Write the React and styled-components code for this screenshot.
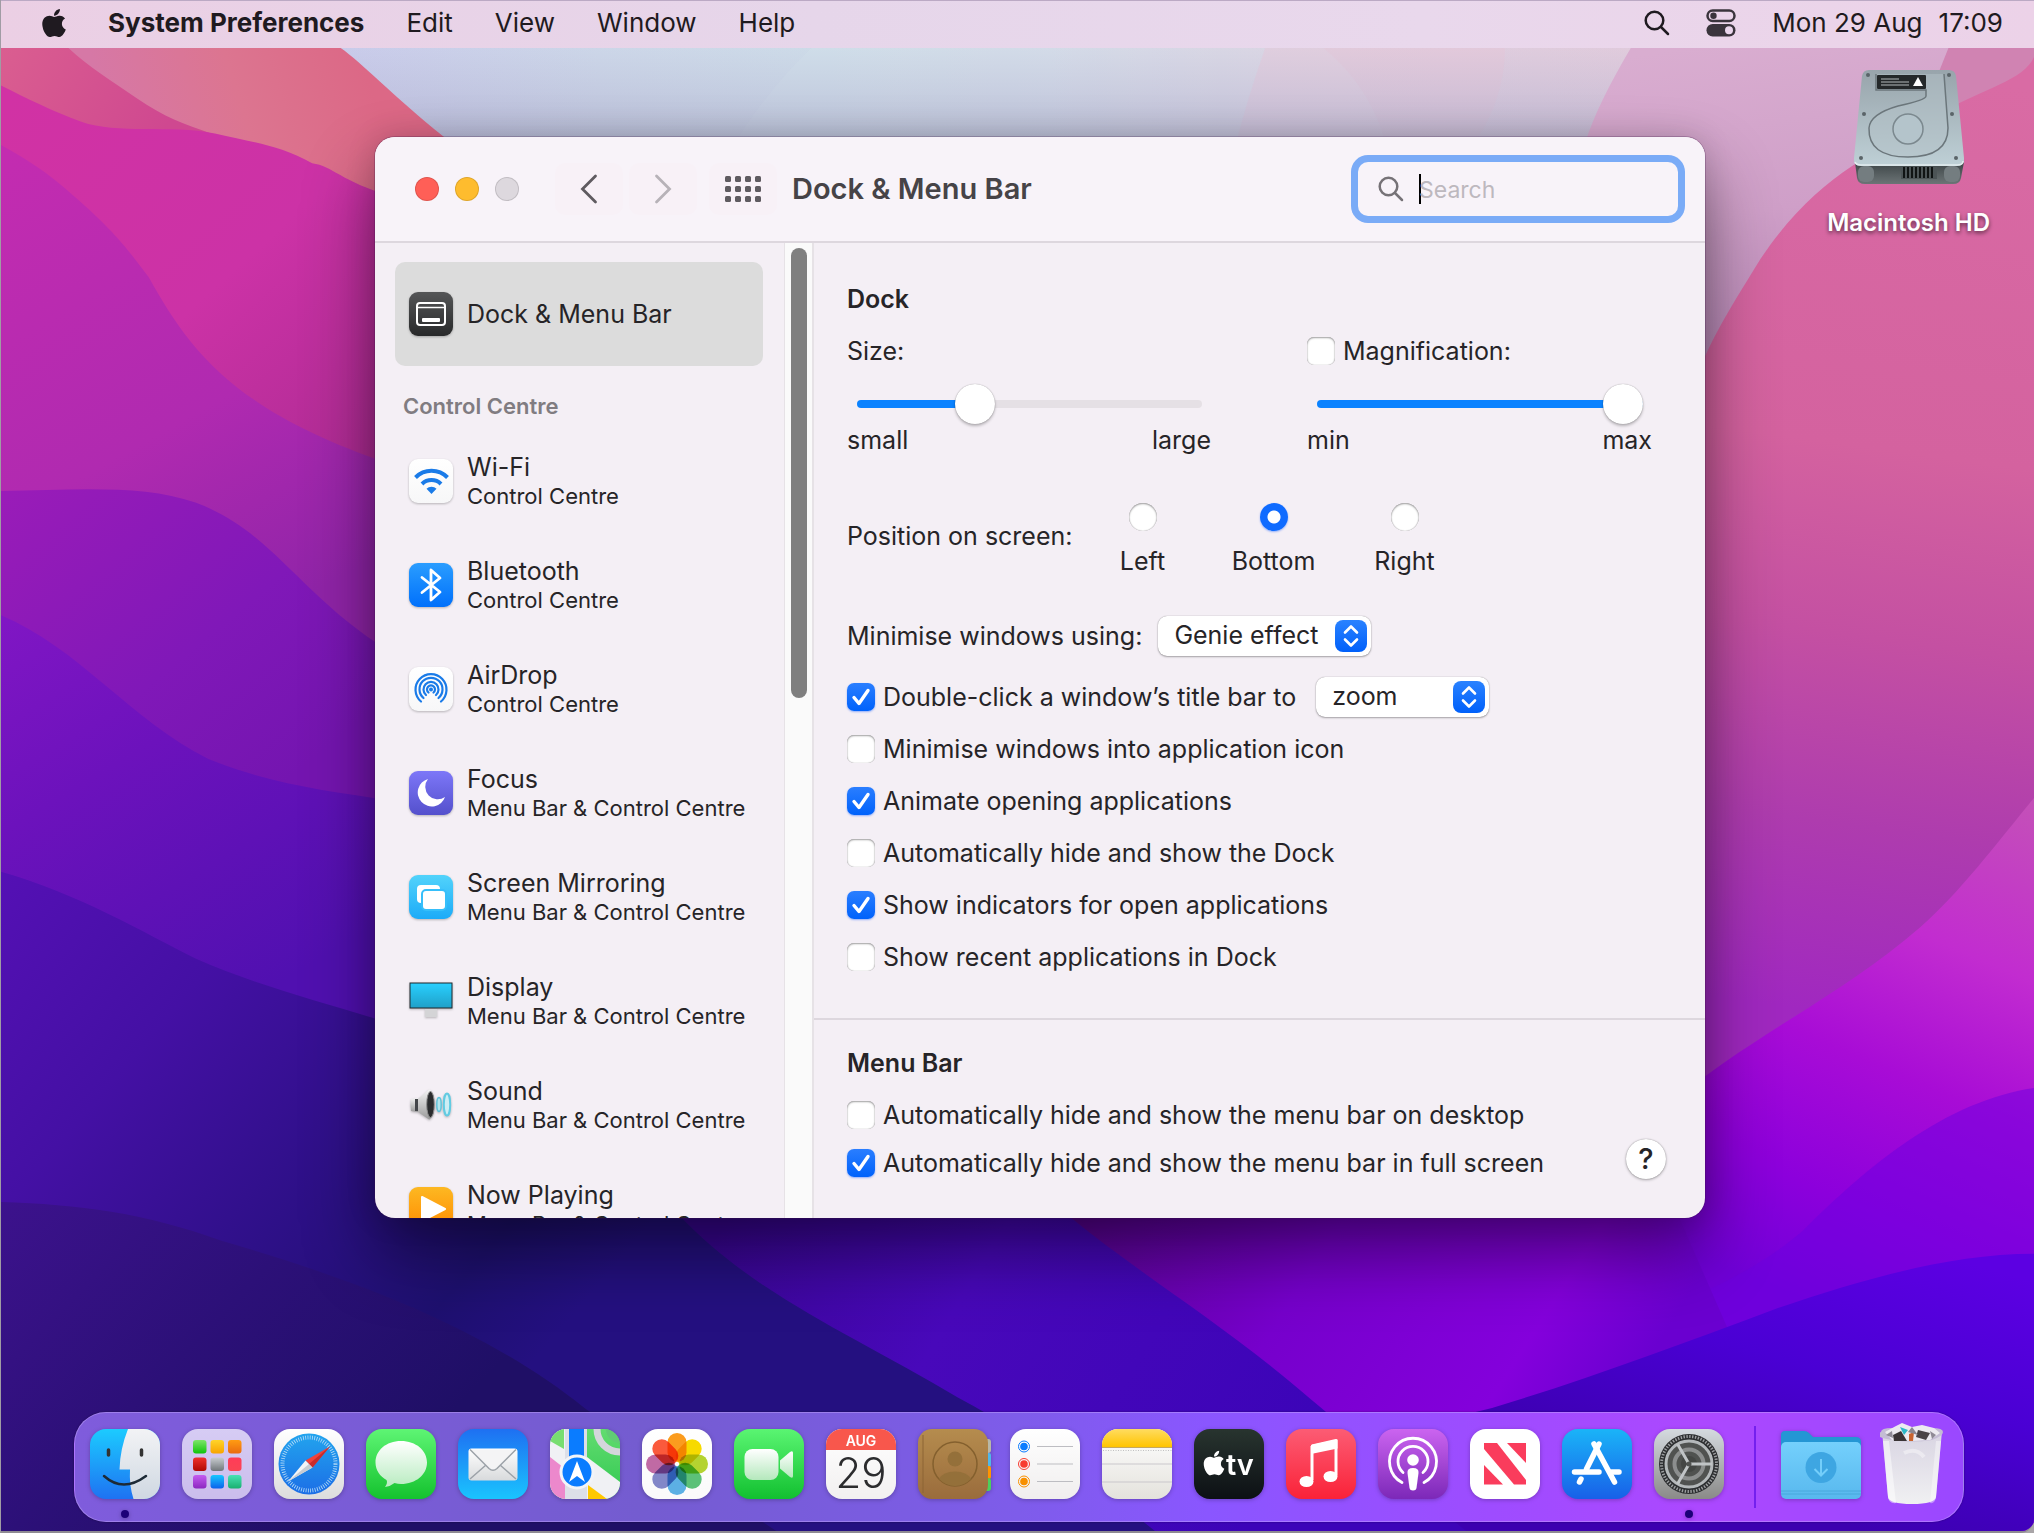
// src/App.jsx
import React, { useState } from "react";
import styled, { createGlobalStyle } from "styled-components";
import { FaApple } from "react-icons/fa";

const MENUS = ["Edit", "View", "Window", "Help"];

const SIDEBAR = [
  { name: "Wi-Fi", place: "Control Centre", icon: "wifi" },
  { name: "Bluetooth", place: "Control Centre", icon: "bluetooth" },
  { name: "AirDrop", place: "Control Centre", icon: "airdrop" },
  { name: "Focus", place: "Menu Bar & Control Centre", icon: "focus" },
  { name: "Screen Mirroring", place: "Menu Bar & Control Centre", icon: "mirroring" },
  { name: "Display", place: "Menu Bar & Control Centre", icon: "display" },
  { name: "Sound", place: "Menu Bar & Control Centre", icon: "sound" },
  { name: "Now Playing", place: "Menu Bar & Control Centre", icon: "playing" },
];

const DOCK_OPTIONS = [
  { id: "minimise-into", label: "Minimise windows into application icon", on: false },
  { id: "animate", label: "Animate opening applications", on: true },
  { id: "hide-dock", label: "Automatically hide and show the Dock", on: false },
  { id: "indicators", label: "Show indicators for open applications", on: true },
  { id: "recent", label: "Show recent applications in Dock", on: false },
];

const MENU_BAR_OPTIONS = [
  { id: "hide-desktop", label: "Automatically hide and show the menu bar on desktop", on: false },
  { id: "hide-full", label: "Automatically hide and show the menu bar in full screen", on: true },
];

/* ---------- drawing helpers ---------- */

const Grad = ({ id, from, to }) => (
  <linearGradient id={id} x1="0" y1="0" x2="0" y2="1">
    <stop offset="0" stopColor={from} />
    <stop offset="1" stopColor={to} />
  </linearGradient>
);

const Tile = ({ id, from, to, children }) => (
  <svg viewBox="0 0 70 70" width="70" height="70" aria-hidden="true">
    <defs>
      <Grad id={id} from={from} to={to} />
      <clipPath id={`${id}-clip`}>
        <rect width="70" height="70" rx="16" />
      </clipPath>
    </defs>
    <rect width="70" height="70" rx="16" fill={`url(#${id})`} />
    <g clipPath={`url(#${id}-clip)`}>{children}</g>
  </svg>
);

const range = (n) => Array.from({ length: n }, (_, i) => i);

/* ---------- wallpaper ---------- */

const UserGrad = ({ id, line, stops }) => (
  <linearGradient
    id={id}
    gradientUnits="userSpaceOnUse"
    x1={line[0]}
    y1={line[1]}
    x2={line[2]}
    y2={line[3]}
  >
    {stops.map(([offset, color]) => (
      <stop key={offset} offset={offset} stopColor={color} />
    ))}
  </linearGradient>
);

const Wallpaper = () => (
  <WallpaperSvg viewBox="0 0 1568 1182" preserveAspectRatio="none" aria-hidden="true">
    <defs>
      <UserGrad
        id="sky"
        line={[260, 0, 1260, 0]}
        stops={[[0, "#c9cbea"], [0.2, "#ccd6e8"], [0.38, "#cddbe8"], [0.55, "#d3d7e6"], [0.7, "#dccfe0"], [1, "#e0cbdc"]]}
      />
      <UserGrad id="skyShade" line={[0, 37, 0, 110]} stops={[[0, "#b0b0d000"], [1, "#a8a8c890"]]} />
      <UserGrad id="lilac" line={[1300, 37, 1340, 300]} stops={[[0, "#d9add0"], [0.5, "#cf9fc8"], [1, "#b585b5"]]} />
      <UserGrad id="rose" line={[1500, 60, 1400, 780]} stops={[[0, "#d96ba4"], [0.4, "#d4629f"], [0.6, "#c450a2"], [0.8, "#ae3cae"], [1, "#a028c0"]]} />
      <UserGrad id="ridge" line={[1568, 620, 1400, 1010]} stops={[[0, "#c450b8"], [0.3, "#c22cd0"], [0.55, "#a80cd6"], [0.8, "#8c00dc"], [1, "#7000d8"]]} />
      <UserGrad id="corner" line={[1500, 970, 1440, 1182]} stops={[[0, "#5c00e2"], [0.5, "#4a00d4"], [1, "#3c00b0"]]} />
      <UserGrad id="salmon" line={[90, 110, 280, 50]} stops={[[0, "#d678a6"], [0.5, "#dc7590"], [1, "#dc6886"]]} />
      <UserGrad id="coral" line={[0, 37, 120, 110]} stops={[[0, "#da5e90"], [1, "#cf4890"]]} />
      <UserGrad id="magenta" line={[0, 80, 290, 400]} stops={[[0, "#d132a4"], [0.5, "#cc32a6"], [1, "#a82a90"]]} />
      <UserGrad id="orchid" line={[0, 120, 200, 480]} stops={[[0, "#c32cb0"], [0.6, "#b02ab0"], [1, "#9024a8"]]} />
      <UserGrad id="plum" line={[0, 380, 200, 620]} stops={[[0, "#9a1cb8"], [0.6, "#8018b8"], [1, "#7415b0"]]} />
      <UserGrad id="violet" line={[0, 480, 180, 780]} stops={[[0, "#8016c4"], [0.4, "#6c12bc"], [1, "#5010b0"]]} />
      <UserGrad id="indigo" line={[0, 680, 420, 1040]} stops={[[0, "#5410b4"], [0.3, "#4410a4"], [0.6, "#2e1088"], [0.85, "#1e1070"], [1, "#241080"]]} />
      <UserGrad id="navy" line={[0, 930, 260, 1182]} stops={[[0, "#3c128c"], [0.5, "#2c1078"], [1, "#1f0f66"]]} />
      <UserGrad id="royal" line={[560, 940, 960, 1182]} stops={[[0, "#3a0696"], [0.4, "#4808ba"], [1, "#3c04b8"]]} />
      <UserGrad id="grape" line={[840, 930, 1200, 1160]} stops={[[0, "#5c0498"], [0.4, "#7600cc"], [0.8, "#8400dc"], [1, "#6a00d0"]]} />
    </defs>
    <rect width="1568" height="1182" fill="#7400cc" />
    <path d="M200 0H1300V400H200z" fill="url(#sky)" />
    <path d="M560 120Q590 70 625 37H1020Q1060 70 1070 120z" fill="#d5e2ea" opacity=".35" />
    <path d="M975 37Q960 80 950 120H1130Q1160 80 1160 37z" fill="#e6c6d8" opacity=".45" />
    <path d="M200 37H1300V130H200z" fill="url(#skyShade)" />
    <path d="M1257 37C1240 66 1228 90 1222 110L1240 480H1568V0H1270z" fill="url(#lilac)" />
    <path d="M1502 37Q1490 70 1470 100H1568V37z" fill="#d083b2" />
    <path d="M1568 44C1560 62 1530 68 1490 90C1440 122 1400 136 1357 200C1330 244 1318 262 1300 310V900H1568z" fill="url(#rose)" />
    <path d="M1568 616C1540 650 1510 690 1480 716C1420 768 1350 800 1290 850L1100 1000V1182H1568z" fill="url(#ridge)" />
    <path d="M1568 840C1500 850 1440 900 1390 950C1320 1010 1220 1030 1100 1060V1182H1568z" fill="#6c00e0" opacity=".5" />
    <path d="M760 900C860 975 920 1015 1000 1075C1060 1120 1110 1150 1180 1182H1400L1290 930z" fill="url(#grape)" />
    <path d="M1568 968C1500 968 1430 990 1370 1010C1290 1040 1220 1066 1150 1087C1080 1105 1010 1110 950 1182H1568z" fill="url(#corner)" />
    <path d="M400 900H785L825 940C880 985 940 1020 1010 1080C1060 1122 1090 1150 1130 1182H400z" fill="url(#royal)" />

    <path d="M0 0H235L262 37C278 48 300 72 342 106L380 140V400H0z" fill="url(#salmon)" />
    <path d="M0 37H52C68 52 85 62 105 76C125 90 142 96 162 103V200H0z" fill="url(#coral)" />
    <path d="M0 66C20 76 40 86 62 94C90 104 130 96 165 103C195 110 215 112 240 126C256 128 262 140 300 151V600H0z" fill="url(#magenta)" />
    <path d="M0 112C22 124 36 134 50 146C90 180 100 196 114 214C145 270 180 318 300 358V620H0z" fill="url(#orchid)" />
    <path d="M0 379C60 378 110 374 150 388C210 410 230 460 300 503V700H0z" fill="url(#plum)" />
    <path d="M0 475C60 500 100 556 160 586C210 606 250 610 300 618V850H0z" fill="url(#violet)" />
    <path d="M0 673C60 690 110 720 150 740C200 762 250 774 300 790V880H480C540 985 640 1020 738 1079C800 1112 850 1150 890 1182H0z" fill="url(#indigo)" />
    <path d="M0 928C60 930 110 936 170 958C260 984 370 1022 450 1087C510 1130 550 1150 598 1182H0z" fill="url(#navy)" />
  </WallpaperSvg>
);

/* ---------- sidebar icons ---------- */

const SideTile = ({ id, from, to, children }) => (
  <svg viewBox="0 0 44 44" width="44" height="44" aria-hidden="true">
    <defs>
      <Grad id={id} from={from} to={to} />
    </defs>
    <rect width="44" height="44" rx="9" fill={`url(#${id})`} />
    {children}
  </svg>
);

const sideIcons = {
  dock: (
    <SideTile id="s-dock" from="#555657" to="#28292a">
      <rect x="8" y="11" width="28" height="22" rx="3" fill="none" stroke="#fff" strokeWidth="2" />
      <path d="M8 15.500h28" stroke="#fff" strokeWidth="1.500" />
      <rect x="13" y="26" width="18" height="4" rx="1" fill="#fff" />
    </SideTile>
  ),
  wifi: (
    <SideTile id="s-wifi" from="#ffffff" to="#f7f7f8">
      <g fill="none" stroke="#1a7be8" strokeWidth="4">
        <path d="M6.500 18.500a22.500 22.500 0 0 1 32 0" />
        <path d="M13 25a13.500 13.500 0 0 1 19 0" />
      </g>
      <path d="M22.500 35l-5-5.200a7 7 0 0 1 10 0z" fill="#1a7be8" />
    </SideTile>
  ),
  bluetooth: (
    <SideTile id="s-bt" from="#2a9dff" to="#0070fb">
      <path d="M13 14.500L31 29L22 37V7L31 15L13 29.500" fill="none" stroke="#fff" strokeWidth="2.800" strokeLinejoin="round" strokeLinecap="round" />
    </SideTile>
  ),
  airdrop: (
    <SideTile id="s-air" from="#ffffff" to="#f7f7f8">
      <g fill="none" stroke="#1a7be8" strokeWidth="2.200" strokeLinecap="round">
        <path d="M12 34.500a15.500 15.500 0 1 1 20 0" />
        <path d="M14.500 31a11.500 11.500 0 1 1 15 0" />
        <path d="M17 28a7.500 7.500 0 1 1 10 0" />
        <path d="M19.500 25.500a4 4 0 1 1 5 0" />
      </g>
      <circle cx="22" cy="22.500" r="2" fill="#1a7be8" />
    </SideTile>
  ),
  focus: (
    <SideTile id="s-focus" from="#7d77f8" to="#5450cc">
      <path d="M19 8A14 14 0 1 0 36 26A12.500 12.500 0 0 1 19 8z" fill="#fff" />
    </SideTile>
  ),
  mirroring: (
    <SideTile id="s-mirror" from="#52d3fb" to="#1cabf8">
      <rect x="8" y="10" width="23" height="18" rx="4" fill="#fff" />
      <rect x="13" y="15" width="24" height="20" rx="4" fill="#fff" stroke="#36bffa" strokeWidth="2" />
    </SideTile>
  ),
  display: (
    <svg viewBox="0 0 44 44" width="44" height="44" aria-hidden="true">
      <defs>
        <Grad id="s-display" from="#29d0ff" to="#1fa0c8" />
      </defs>
      <rect x="16" y="30" width="12" height="8" fill="#d4d4d6" />
      <rect x="1" y="4" width="42" height="25" fill="url(#s-display)" stroke="#20282c" strokeWidth="1" />
    </svg>
  ),
  sound: (
    <svg viewBox="0 0 44 44" width="44" height="44" aria-hidden="true">
      <defs>
        <Grad id="s-cone" from="#f4f4f4" to="#9a9a9a" />
      </defs>
      <path d="M2 16Q1 21 2 28L9 29V15z" fill="url(#s-cone)" />
      <path d="M6 16h5v12H6z" fill="#44464a" />
      <path d="M9 16L20 6.500Q24 6 24 21T20 36.500L9 29z" fill="url(#s-cone)" />
      <ellipse cx="21.500" cy="21.500" rx="3.800" ry="13" fill="#2b2c2e" stroke="#8c8c8c" />
      <ellipse cx="30" cy="21.500" rx="2.200" ry="7" fill="#b4e6ee" stroke="#62c4da" strokeWidth="1.500" />
      <ellipse cx="38" cy="21.500" rx="3.200" ry="11" fill="#cdeef4" stroke="#62cbe2" strokeWidth="2" />
    </svg>
  ),
  playing: (
    <SideTile id="s-play" from="#fdb822" to="#ff8a00">
      <path d="M13 10L36 22L13 34z" fill="#fff" stroke="#fff" strokeWidth="2" strokeLinejoin="round" />
    </SideTile>
  ),
};

/* ---------- dock icons ---------- */

const Finder = () => (
  <Tile id="finder" from="#1ccbff" to="#1e72f2">
    <defs>
      <Grad id="finder-r" from="#f2f3f5" to="#cfd8e2" />
    </defs>
    <path d="M38 0Q30 20 29.500 40.500H40Q39 56 43.500 70H70V0z" fill="url(#finder-r)" />
    <path d="M18.500 21v5M51.500 21v5" stroke="#333" strokeWidth="3.500" strokeLinecap="round" />
    <path d="M14 47Q33 64 56 47" fill="none" stroke="#1d2a36" strokeWidth="2.500" strokeLinecap="round" />
  </Tile>
);

const PAD = [
  ["#7ee56a", "#10c40a"], ["#ffd42a", "#f8a400"], ["#ff9c12", "#ea6a10"],
  ["#f0302c", "#b00804"], ["#c8ccd0", "#70767a"], ["#ff3c58", "#fa4454"],
  ["#c45cf0", "#8c28c0"], ["#18c6ff", "#0a62ec"], ["#48e2b4", "#18b070"],
];

const Launchpad = () => (
  <Tile id="launchpad" from="#d6ccf4" to="#cbbdec">
    {PAD.map(([from, to], i) => (
      <g key={from}>
        <defs>
          <Grad id={`pad-${i}`} from={from} to={to} />
        </defs>
        <rect x={11 + (i % 3) * 17.5} y={11 + Math.floor(i / 3) * 17.5} width="13.500" height="13.500" rx="3" fill={`url(#pad-${i})`} />
      </g>
    ))}
  </Tile>
);

const Safari = () => (
  <Tile id="safari" from="#ffffff" to="#dcdcdc">
    <defs>
      <Grad id="safari-c" from="#22a4ee" to="#1c6ee6" />
    </defs>
    <circle cx="35" cy="35" r="30.500" fill="url(#safari-c)" />
    <circle cx="35" cy="35" r="26.500" fill="none" stroke="#b8ddf8" strokeWidth="4" strokeDasharray="0.800 1.513" />
    <path d="M56 17.500L31.500 31.500L38.500 38.500z" fill="#f0423c" />
    <path d="M14 52.500L31.500 31.500L38.500 38.500z" fill="#f4f4f6" />
    <path d="M56 17.500L38.500 38.500L35 35z" fill="#c82c2c" />
    <path d="M14 52.500L35 35L38.500 38.500z" fill="#c8ccd2" />
  </Tile>
);

const Messages = () => (
  <Tile id="messages" from="#5ef574" to="#14c22e">
    <defs>
      <Grad id="bubble" from="#ffffff" to="#b8ecc0" />
    </defs>
    <path d="M35 12C20 12 9.500 21.500 9.500 33.500C9.500 41 14 47.500 20.500 51Q22 54 19 58Q25 57 28.500 54Q32 55 35 55C50 55 61 45.500 61 33.500S50 12 35 12z" fill="url(#bubble)" />
  </Tile>
);

const Mail = () => (
  <Tile id="mail" from="#1e70f2" to="#1ac4fe">
    <defs>
      <Grad id="envelope" from="#ffffff" to="#d8dadc" />
    </defs>
    <rect x="10.500" y="19.500" width="49" height="32" rx="3" fill="url(#envelope)" />
    <path d="M12 50L28 36M58 50L42 36" stroke="#9ca2a8" strokeWidth="1.500" />
    <path d="M12 20.500L31 39.500Q35 43 39 39.500L58 20.500" fill="#f4f4f5" stroke="#9ca2a8" strokeWidth="1.500" />
  </Tile>
);

const Maps = () => (
  <Tile id="maps" from="#62dc70" to="#30c850">
    <path d="M0 0H16V70H0z" fill="#f0f1f4" />
    <path d="M0 0H14V20L0 12z" fill="#78de70" />
    <path d="M0 28L18 42V70H0z" fill="#ec88cc" />
    <path d="M15 0H37V70H15z" fill="#dcdfe8" />
    <path d="M19 0H34V40H19z" fill="#0a7cff" />
    <path d="M37 28L70 53V70H37z" fill="#f0f1f4" />
    <path d="M38 56L57 70H38z" fill="#ffc800" />
    <circle cx="70" cy="0" r="23" fill="none" stroke="#d4d6dc" strokeWidth="7" />
    <circle cx="70" cy="0" r="14" fill="#60cc74" />
    <circle cx="27" cy="43" r="16" fill="#0a7cff" stroke="#f2f4f8" strokeWidth="3" />
    <path d="M27 32L35 53L27 47L19 53z" fill="#fff" />
  </Tile>
);

const PETALS = ["#fb9c1e", "#f7da00", "#b4d330", "#5cc178", "#5cb0e4", "#8287c8", "#c06aa4", "#fa5a3c"];

const Photos = () => (
  <Tile id="photos" from="#ffffff" to="#fafafa">
    {PETALS.map((color, i) => (
      <PetalRect key={color} x="25.500" y="4" width="19" height="29" rx="9.500" fill={color} transform={`rotate(${i * 45} 35 35)`} />
    ))}
  </Tile>
);

const FaceTime = () => (
  <Tile id="facetime" from="#5af572" to="#12c030">
    <defs>
      <Grad id="cam" from="#ffffff" to="#b4e8bc" />
    </defs>
    <rect x="10.500" y="20" width="34" height="31" rx="8" fill="url(#cam)" />
    <path d="M46 31.500L56 23Q59 21 59 24V47Q59 50 56 48L46 39.500z" fill="url(#cam)" />
  </Tile>
);

const Contacts = () => (
  <svg viewBox="0 0 74 70" width="74" height="70" aria-hidden="true">
    <defs>
      <Grad id="leather" from="#b58c4e" to="#9a6c3c" />
    </defs>
    <rect x="60" y="10" width="13" height="14" rx="3" fill="#b8b8a8" />
    <rect x="60" y="24" width="13" height="14" rx="2" fill="#50b8e8" />
    <rect x="60" y="37" width="13" height="13" rx="2" fill="#ff9500" />
    <rect x="60" y="49" width="13" height="13" rx="3" fill="#4cd05c" />
    <rect width="70" height="70" rx="14" fill="url(#leather)" />
    <path d="M5 6V64" stroke="#8c6434" strokeWidth="1" />
    <g fill="#94703a" stroke="#84602e">
      <circle cx="37" cy="35" r="22" fill="none" strokeWidth="1.500" />
      <circle cx="37" cy="30" r="7.500" stroke="none" />
      <path d="M21 50Q25 42.500 37 42.500T53 50Q46 57 37 57T21 50z" stroke="none" />
    </g>
  </svg>
);

const Reminders = () => (
  <Tile id="reminders" from="#ffffff" to="#f0eeee">
    {["#0a7cff", "#f83c30", "#f89000"].map((color, i) => (
      <g key={color} transform={`translate(0 ${i * 17.5})`}>
        <circle cx="14" cy="17.500" r="5.500" fill="none" stroke={color} strokeWidth="1" />
        <circle cx="14" cy="17.500" r="3.800" fill={color} />
        <path d="M27 17.500H63" stroke="#bdbdc2" strokeWidth="1.200" />
      </g>
    ))}
  </Tile>
);

const Notes = () => (
  <Tile id="notes" from="#ffffff" to="#e4e2dc">
    <defs>
      <Grad id="notes-t" from="#ffdc60" to="#ffc400" />
    </defs>
    <rect width="70" height="18" fill="url(#notes-t)" />
    <path d="M0 18.500H70" stroke="#c4a860" strokeWidth="1" />
    <path d="M1 21.500H70" stroke="#c0c0c0" strokeDasharray="1 1.500" />
    <path d="M0 35H70M0 53H70" stroke="#c9c8cc" strokeWidth="1.200" />
  </Tile>
);

const AppleTv = () => (
  <Tile id="tv" from="#28342f" to="#0c1014">
    <FaApple x="6" y="20" size="28" color="#fff" />
    <text x="32" y="46" fontFamily="Inter, sans-serif" fontSize="29" fontWeight="600" fill="#fff">tv</text>
  </Tile>
);

const Music = () => (
  <Tile id="music" from="#fc5c74" to="#fa2238">
    <path d="M26 17L50 11.500V46.500" fill="none" stroke="#fff" strokeWidth="3" strokeLinejoin="round" />
    <path d="M25 16L51.500 10.500V19.500L25 25z" fill="#fff" />
    <path d="M26 17V51" stroke="#fff" strokeWidth="3" />
    <ellipse cx="20.500" cy="52.500" rx="7" ry="5.500" fill="#fff" />
    <ellipse cx="44.500" cy="47.500" rx="7" ry="5.500" fill="#fff" />
  </Tile>
);

const Podcasts = () => (
  <Tile id="podcasts" from="#cb64f0" to="#7c28b8">
    <g fill="none" stroke="#fff" strokeWidth="2.800" strokeLinecap="round">
      <path d="M24 53.500A23.500 23.500 0 1 1 46 53.500" />
      <path d="M25 43.500A15 15 0 1 1 45 43.500" />
    </g>
    <circle cx="35" cy="31" r="5.800" fill="#fff" />
    <path d="M29.500 44Q29 39 35 39T40.500 44L38.500 59Q38 61.500 35 61.500T31.500 59z" fill="#fff" />
  </Tile>
);

const News = () => (
  <Tile id="news" from="#ffffff" to="#ffffff">
    <g fill="#fa3c5c">
      <path d="M14 14H27L56 51V55.500H44L14 20z" />
      <path d="M37 14H56V34z" />
      <path d="M14 36V55.500H33z" />
    </g>
  </Tile>
);

const AppStore = () => (
  <Tile id="appstore" from="#1ab4f8" to="#1860e8">
    <g fill="none" stroke="#fff" strokeWidth="5.500" strokeLinecap="round">
      <path d="M37 15L24.500 40" />
      <path d="M32 15L52.500 53" />
      <path d="M12.500 43H37M49.500 43H57" />
      <path d="M19 50L17.500 53" />
    </g>
  </Tile>
);

const Settings = () => (
  <Tile id="settings" from="#d4dadf" to="#8a8a88">
    <circle cx="35" cy="35" r="30" fill="#2c2e30" />
    <circle cx="35" cy="35" r="27.500" fill="none" stroke="#9c9ea0" strokeWidth="3" strokeDasharray="1.400 1.480" />
    <circle cx="35" cy="35" r="23" fill="#505250" stroke="#b4b8ba" strokeWidth="3" />
    <circle cx="35" cy="35" r="14.500" fill="none" stroke="#8c8e8e" strokeWidth="4" />
    <circle cx="35" cy="35" r="8" fill="#444644" />
    <g stroke="#c0c4c6" strokeWidth="3">
      <path d="M35 35H58M35 35L23.500 15M35 35L23.500 55" />
    </g>
    <circle cx="35" cy="35" r="2.500" fill="#505250" />
  </Tile>
);

const Folder = () => (
  <svg viewBox="0 0 82 70" width="82" height="70" aria-hidden="true">
    <defs>
      <Grad id="folder" from="#74d0fc" to="#58b8ee" />
    </defs>
    <path d="M1 6Q1 2 5 2H24Q27 2 29 4L33 8H76Q81 8 81 13V30H1z" fill="#2496d4" />
    <rect x="1" y="13" width="80" height="57" rx="5" fill="url(#folder)" />
    <path d="M1 62H81M1 65H81" stroke="#48a8dc" strokeWidth="1" />
    <circle cx="41" cy="38.500" r="15.500" fill="#3ea6e2" />
    <path d="M41 30V46M34.500 40L41 46.500L47.500 40" fill="none" stroke="#74cefa" strokeWidth="2" />
  </svg>
);

const Trash = () => (
  <svg viewBox="0 0 64 82" width="64" height="82" aria-hidden="true">
    <defs>
      <Grad id="bin" from="#d8d4e2" to="#f0f0f2" />
    </defs>
    <path d="M2 8L8 74Q9 81 32 81T56 74L62 8z" fill="url(#bin)" />
    <path d="M1 9Q1 5 12 5H52Q63 5 63 9T52 17Q32 20 12 17T1 9z" fill="#c4bcd4" />
    <path d="M5 9L16 3L22 0L32 4L42 2L54 5L60 10L50 17L32 18L12 17z" fill="#eceaf0" />
    <path d="M13 12L21 8L27 18H14z" fill="#3a3436" />
    <path d="M38 7L50 10L46 17L36 14z" fill="#4a4446" />
    <path d="M20 4L28 7L24 12z" fill="#2cb8c8" />
    <path d="M29 11L34 9L33 18H29z" fill="#c86430" />
    <path d="M32 4L38 12L28 9z" fill="#8a8690" />
    <path d="M6 12L12 8L13 15zM50 8L56 12L52 16z" fill="#8f8a96" />
    <path d="M24 30Q36 24 44 34" fill="none" stroke="#fff" strokeWidth="4" opacity=".4" />
    <path d="M3 18L8 74Q9 81 16 80L9 18z" fill="#fff" opacity=".5" />
    <path d="M61 18L56 74Q55 81 50 80L56 18z" fill="#fff" opacity=".4" />
  </svg>
);

const HardDrive = () => (
  <svg viewBox="0 0 112 116" width="112" height="116" aria-hidden="true">
    <defs>
      <Grad id="hd-top" from="#98a4ab" to="#bed0d6" />
      <Grad id="hd-base" from="#3c4446" to="#6c7476" />
    </defs>
    <path d="M2 92L4 108Q5 114 12 114H100Q107 114 108 108L111 92z" fill="url(#hd-base)" />
    <rect x="5" y="96" width="16" height="16" rx="6" fill="#747d80" />
    <rect x="91" y="96" width="16" height="16" rx="6" fill="#747d80" />
    <rect x="48" y="97" width="36" height="12" fill="#4c5456" />
    <path d="M51 97v11M55 97v11M59 97v11M63 97v11M67 97v11M71 97v11M75 97v11M79 97v11" stroke="#101414" strokeWidth="2" />
    <path d="M9 6Q10 0 16 0H96Q102 0 103 6L111 88Q112 96 104 96H8Q0 96 1 88z" fill="url(#hd-top)" />
    <path d="M2 92Q3 95 8 95H104Q110 95 110 91" fill="none" stroke="#e2ecee" strokeWidth="1.500" />
    <path d="M91 4L95 58Q95 87 55 87T16 58Q17 44 45 36Q73 30 73 26V20H23V4z" fill="#b3c1c8" opacity=".5" />
    <path d="M91 4L95 58Q95 87 55 87T16 58Q17 44 45 36Q73 30 73 26V20H23V4" fill="none" stroke="#6b767b" strokeWidth="1.500" />
    <circle cx="55" cy="59" r="15" fill="#b4c4cb" stroke="#7b888e" strokeWidth="1.500" />
    <rect x="24" y="5" width="49" height="14" rx="1" fill="#24282a" />
    <path d="M28 9H46M28 12H56M28 15H56" stroke="#84898c" strokeWidth="1.500" />
    <path d="M65 7L70 16H60z" fill="#fff" />
    <g fill="#5a6468">
      <circle cx="15" cy="5" r="2" />
      <circle cx="96" cy="5" r="2" />
      <circle cx="11" cy="44" r="2" />
      <circle cx="99" cy="44" r="2" />
      <circle cx="8" cy="88" r="2" />
      <circle cx="103" cy="88" r="2" />
    </g>
  </svg>
);

const Calendar = () => (
  <CalendarTile>
    <CalendarMonth>AUG</CalendarMonth>
    <CalendarDay>29</CalendarDay>
  </CalendarTile>
);

const DOCK_APPS = [
  { name: "Finder", Icon: Finder, open: true },
  { name: "Launchpad", Icon: Launchpad },
  { name: "Safari", Icon: Safari },
  { name: "Messages", Icon: Messages },
  { name: "Mail", Icon: Mail },
  { name: "Maps", Icon: Maps },
  { name: "Photos", Icon: Photos },
  { name: "FaceTime", Icon: FaceTime },
  { name: "Calendar", Icon: Calendar },
  { name: "Contacts", Icon: Contacts },
  { name: "Reminders", Icon: Reminders },
  { name: "Notes", Icon: Notes },
  { name: "TV", Icon: AppleTv },
  { name: "Music", Icon: Music },
  { name: "Podcasts", Icon: Podcasts },
  { name: "News", Icon: News },
  { name: "App Store", Icon: AppStore },
  { name: "System Preferences", Icon: Settings, open: true },
];

/* ---------- controls ---------- */

const SearchGlyph = ({ size, color }) => (
  <svg viewBox="0 0 26 26" width={size} height={size} fill="none" stroke={color} strokeWidth="2.500" strokeLinecap="round" aria-hidden="true">
    <circle cx="10.500" cy="10.500" r="8.800" />
    <path d="M17 17L24 24" />
  </svg>
);

const CheckBox = ({ id, label, defaultOn }) => {
  const [on, setOn] = useState(defaultOn);
  return (
    <CheckRow>
      <CheckBoxCell>
        <CheckInput id={id} type="checkbox" checked={on} onChange={() => setOn(!on)} />
        {on && (
          <CheckMark viewBox="0 0 28 28" width="28" height="28" aria-hidden="true">
            <path d="M7 14.500L12 20.500L21 7.500" />
          </CheckMark>
        )}
      </CheckBoxCell>
      <label htmlFor={id}>{label}</label>
    </CheckRow>
  );
};

const PopUp = ({ id, options, label }) => (
  <PopUpCell>
    <PopUpSelect id={id} aria-label={label}>
      {options.map((option) => (
        <option key={option}>{option}</option>
      ))}
    </PopUpSelect>
    <Stepper viewBox="0 0 32 32" width="32" height="32" aria-hidden="true">
      <defs>
        <Grad id={`${id}-blue`} from="#2a82ff" to="#0060fa" />
      </defs>
      <rect width="32" height="32" rx="8" fill={`url(#${id}-blue)`} />
      <path d="M10 12.500L16 6.500L22 12.500M10 19.500L16 25.500L22 19.500" />
    </Stepper>
  </PopUpCell>
);

const Slider = ({ id, label, start, min, max }) => {
  const [value, setValue] = useState(start);
  return (
    <>
      <SliderRow>
        <SliderInput
          id={id}
          type="range"
          aria-label={label}
          value={value}
          $fill={value}
          onChange={(e) => setValue(Number(e.target.value))}
        />
      </SliderRow>
      <SliderEnds>
        <span>{min}</span>
        <span>{max}</span>
      </SliderEnds>
    </>
  );
};

/* ---------- page ---------- */

const App = () => {
  const [position, setPosition] = useState("Bottom");
  const [query, setQuery] = useState("");

  return (
    <>
      <GlobalStyle />
      <Desktop>
        <Wallpaper />

        <MenuBar>
          <AppleButton aria-label="Apple menu">
            <FaApple size={32} />
          </AppleButton>
          <MenuItem $bold>System Preferences</MenuItem>
          {MENUS.map((menu) => (
            <MenuItem key={menu}>{menu}</MenuItem>
          ))}
          <StatusArea>
            <MenuItem aria-label="Spotlight">
              <SearchGlyph size={26} color="#1f1a20" />
            </MenuItem>
            <MenuItem aria-label="Control Centre">
              <svg viewBox="0 0 30 28" width="30" height="28" aria-hidden="true">
                <rect x="1.500" y="1.500" width="27" height="10.500" rx="5.200" fill="none" stroke="#3a343c" strokeWidth="2.500" />
                <circle cx="7.500" cy="6.800" r="3.200" fill="#3a343c" />
                <rect x="0.500" y="15" width="29" height="12.500" rx="6.200" fill="#3a343c" />
                <circle cx="23" cy="21.200" r="4" fill="#ead6ec" />
              </svg>
            </MenuItem>
            <Clock>
              <span>Mon 29 Aug</span>
              <span>17:09</span>
            </Clock>
          </StatusArea>
        </MenuBar>

        <Workspace>
          <Window>
            <TitleBar>
              <Lights>
                <Light $color="#ff5f57" aria-label="Close" />
                <Light $color="#febc2e" aria-label="Minimise" />
                <Light $color="#ddd8de" aria-label="Zoom" disabled />
              </Lights>
              <ToolButtons>
                <ToolButton aria-label="Back">
                  <svg viewBox="0 0 18 30" width="18" height="30" fill="none" stroke="#5f5b60" strokeWidth="2.800" strokeLinecap="round">
                    <path d="M15.500 2L2.500 15L15.500 28" />
                  </svg>
                </ToolButton>
                <ToolButton aria-label="Forward" disabled>
                  <svg viewBox="0 0 18 30" width="18" height="30" fill="none" stroke="#b7b2b8" strokeWidth="2.800" strokeLinecap="round">
                    <path d="M2.500 2L15.500 15L2.500 28" />
                  </svg>
                </ToolButton>
              </ToolButtons>
              <ToolButton aria-label="Show All">
                <svg viewBox="0 0 36 26" width="36" height="26" fill="#5f5b60">
                  {range(12).map((i) => (
                    <rect key={i} x={(i % 4) * 10} y={Math.floor(i / 4) * 10} width="6" height="6" rx="1.500" />
                  ))}
                </svg>
              </ToolButton>
              <Title>Dock &amp; Menu Bar</Title>
              <SearchField>
                <SearchGlyph size={26} color="#767277" />
                <SearchText>
                  <Caret />
                  <SearchInput
                    type="text"
                    aria-label="Search"
                    placeholder="Search"
                    value={query}
                    onChange={(e) => setQuery(e.target.value)}
                  />
                </SearchText>
              </SearchField>
            </TitleBar>

            <Body>
              <Sidebar>
                <SideRow $selected>
                  {sideIcons.dock}
                  <SideName>Dock &amp; Menu Bar</SideName>
                </SideRow>
                <SideHeading>Control Centre</SideHeading>
                {SIDEBAR.map((item) => (
                  <SideRow key={item.name}>
                    {sideIcons[item.icon]}
                    <SideText>
                      <SideName>{item.name}</SideName>
                      <SidePlace>{item.place}</SidePlace>
                    </SideText>
                  </SideRow>
                ))}
              </Sidebar>
              <ScrollTrack>
                <ScrollThumb />
              </ScrollTrack>

              <Content>
                <DockSection>
                  <Heading>Dock</Heading>
                  <SliderGrid>
                    <div>
                      <SliderLabel htmlFor="size">Size:</SliderLabel>
                      <Slider id="size" label="Size" start={32} min="small" max="large" />
                    </div>
                    <div>
                      <CheckBox id="magnification" label="Magnification:" defaultOn={false} />
                      <Slider id="magnify" label="Magnification" start={100} min="min" max="max" />
                    </div>
                  </SliderGrid>

                  <PositionRow role="radiogroup" aria-labelledby="position-label">
                    <PositionLabel id="position-label">Position on screen:</PositionLabel>
                    {["Left", "Bottom", "Right"].map((side) => (
                      <RadioOption key={side}>
                        <RadioInput
                          type="radio"
                          name="position"
                          checked={position === side}
                          onChange={() => setPosition(side)}
                        />
                        <span>{side}</span>
                      </RadioOption>
                    ))}
                  </PositionRow>

                  <PopUpRow>
                    <label htmlFor="effect">Minimise windows using:</label>
                    <PopUp id="effect" options={["Genie effect", "Scale effect"]} />
                  </PopUpRow>
                  <DoubleClickRow>
                    <CheckBox id="double-click" label="Double-click a window’s title bar to" defaultOn />
                    <PopUp id="action" label="Double-click action" options={["zoom", "minimise"]} />
                  </DoubleClickRow>
                  <CheckList>
                    {DOCK_OPTIONS.map((o) => (
                      <CheckBox key={o.id} id={o.id} label={o.label} defaultOn={o.on} />
                    ))}
                  </CheckList>
                </DockSection>

                <MenuBarSection>
                  <Heading>Menu Bar</Heading>
                  <MenuBarRow>
                    <TightCheckList>
                      {MENU_BAR_OPTIONS.map((o) => (
                        <CheckBox key={o.id} id={o.id} label={o.label} defaultOn={o.on} />
                      ))}
                    </TightCheckList>
                    <HelpButton aria-label="Help">?</HelpButton>
                  </MenuBarRow>
                </MenuBarSection>
              </Content>
            </Body>
          </Window>

          <Drive>
            <HardDrive />
            <span>Macintosh HD</span>
          </Drive>
        </Workspace>

        <DockArea>
          <Dock>
            {DOCK_APPS.map(({ name, Icon, open }) => (
              <DockItem key={name} aria-label={name} $open={open}>
                <Icon />
              </DockItem>
            ))}
            <DockDivider />
            <DockItem aria-label="Downloads" $wide>
              <Folder />
            </DockItem>
            <TrashItem aria-label="Bin">
              <Trash />
            </TrashItem>
          </Dock>
        </DockArea>
      </Desktop>
    </>
  );
};

export default App;

const GlobalStyle = createGlobalStyle`
  * {
    box-sizing: border-box;
  }

  body {
    margin: 0;
    background: #a9a5a8;
    color: #262427;
    font-family: Inter, "Liberation Sans", sans-serif;
    font-size: 25px;
    line-height: 32px;
  }

  button,
  input,
  select {
    margin: 0;
    padding: 0;
    border: 0;
    background: none;
    color: inherit;
    font: inherit;
  }

  svg {
    display: block;
    flex: none;
  }
`;

const Desktop = styled.div`
  position: relative;
  display: flex;
  flex-direction: column;
  min-height: 100vh;
  overflow: hidden;
  border-left: 1px solid #a09ca4;
  border-bottom: 2px solid #8e8a92;
  border-radius: 0 0 14px 0;
  isolation: isolate;
`;

const WallpaperSvg = styled.svg`
  position: absolute;
  inset: 0;
  z-index: -1;
  width: 100%;
  height: 100%;
`;

const MenuBar = styled.header`
  display: flex;
  align-items: center;
  gap: 42px;
  height: 48px;
  padding: 0 31px 3px 37px;
  border-top: 1px solid #bba9c4;
  background: linear-gradient(90deg, #ebcfe4, #e6d6ea 40%, #e9d8ec 70%, #ecd2e8);
  color: #1f1a20;
  font-size: 26px;
`;

const AppleButton = styled.button`
  margin-right: -4px;
`;

const MenuItem = styled.button`
  font-weight: ${(p) => (p.$bold ? 700 : 400)};
  white-space: nowrap;
`;

const StatusArea = styled.div`
  display: flex;
  align-items: center;
  gap: 36px;
  margin-left: auto;
`;

const Clock = styled.div`
  display: flex;
  gap: 16px;
  white-space: nowrap;
`;

const Workspace = styled.main`
  position: relative;
  padding: 89px 329px 30px 374px;
`;

const Window = styled.section`
  overflow: hidden;
  border-radius: 20px;
  background: #f4eff5;
  box-shadow: 0 0 0 1px rgba(60, 20, 70, 0.25), 0 36px 70px rgba(0, 0, 0, 0.45), 0 0 30px rgba(0, 0, 0, 0.15);
`;

const TitleBar = styled.div`
  display: flex;
  align-items: center;
  height: 106px;
  padding: 0 27px 0 40px;
  border-bottom: 2px solid #ddd7de;
  background: #f8f3f9;
`;

const Lights = styled.div`
  display: flex;
  gap: 16px;
  margin-right: 36px;
`;

const Light = styled.button`
  width: 24px;
  height: 24px;
  border: 1px solid rgba(0, 0, 0, 0.12);
  border-radius: 50%;
  background: ${(p) => p.$color};
`;

const ToolButtons = styled.div`
  display: flex;
  gap: 6px;
  margin-right: 12px;
`;

const ToolButton = styled.button`
  display: grid;
  place-items: center;
  min-width: 68px;
  height: 52px;
  border-radius: 10px;
  background: #f8f1f7;
`;

const Title = styled.h1`
  margin: 0 auto 0 15px;
  color: #464347;
  font-size: 29px;
  font-weight: 600;
  line-height: 40px;
`;

const SearchField = styled.div`
  display: flex;
  align-items: center;
  gap: 15px;
  width: 320px;
  height: 54px;
  padding: 0 20px;
  border-radius: 10px;
  background: #f8f3f9;
  box-shadow: 0 0 0 7px #7aabf7;
`;

const SearchText = styled.div`
  display: flex;
  flex: 1;
  align-items: center;
  min-width: 0;
`;

const Caret = styled.span`
  width: 2px;
  height: 30px;
  margin-right: -2px;
  background: #000;
`;

const SearchInput = styled.input`
  width: 100%;
  padding-top: 2px;
  outline: none;
  font-size: 23px;

  &::placeholder {
    color: #bdb8be;
    opacity: 1;
  }
`;

const Body = styled.div`
  display: grid;
  grid-template-columns: 409px 30px 1fr;
`;

/* as tall as the settings beside it, the rest of the list is clipped */
const Sidebar = styled.nav`
  height: 0;
  min-height: 100%;
  padding: 19px 21px 0 20px;
  overflow: hidden;
`;

const SideRow = styled.button`
  display: flex;
  align-items: center;
  gap: 14px;
  width: 100%;
  height: 104px;
  padding: 0 14px;
  border-radius: 10px;
  background: ${(p) => (p.$selected ? "#dcdcdc" : "transparent")};
  text-align: left;
  white-space: nowrap;

  svg {
    filter: drop-shadow(0 1px 1px rgba(0, 0, 0, 0.25));
  }
`;

const SideText = styled.span`
  display: grid;
`;

const SideName = styled.span`
  line-height: 30px;
`;

const SidePlace = styled.span`
  font-size: 22px;
  line-height: 28px;
`;

const SideHeading = styled.h2`
  margin: 0;
  padding: 28px 8px 11px;
  color: #807c81;
  font-size: 22px;
  font-weight: 600;
  line-height: 24px;
`;

const ScrollTrack = styled.div`
  padding: 5px 6px;
  border: solid #e6e2e6;
  border-width: 0 2px 0 1px;
  background: #fafafa;
`;

const ScrollThumb = styled.div`
  width: 16px;
  height: 450px;
  border-radius: 8px;
  background: #7f7f7f;
`;

const Content = styled.div`
  min-width: 0;
`;

const DockSection = styled.section`
  padding: 40px 53px 45px 33px;
  border-bottom: 2px solid #ddd7de;
`;

const Heading = styled.h2`
  margin: 0 0 20px;
  font-size: 25px;
  font-weight: 600;
  line-height: 32px;
`;

const SliderGrid = styled.div`
  display: grid;
  grid-template-columns: 364fr 345fr;
  gap: 96px;
  margin-bottom: 48px;
`;

const SliderLabel = styled.label`
  display: block;
`;

const SliderRow = styled.div`
  display: flex;
  height: 42px;
  margin-top: 16px;
  padding: 0 9px 0 10px;
`;

const SliderInput = styled.input`
  width: 100%;
  appearance: none;

  &::-webkit-slider-runnable-track {
    height: 8px;
    border-radius: 4px;
    background: linear-gradient(90deg, #0a82ff ${(p) => p.$fill}%, #e5e0e5 ${(p) => p.$fill}%);
  }

  &::-webkit-slider-thumb {
    width: 40px;
    height: 40px;
    margin-top: -16px;
    border-radius: 50%;
    background: #fff;
    box-shadow: 0 0 1px rgba(0, 0, 0, 0.4), 0 2px 3px rgba(0, 0, 0, 0.25);
    appearance: none;
  }
`;

const SliderEnds = styled.div`
  display: flex;
  justify-content: space-between;
  line-height: 30px;
`;

const PositionRow = styled.div`
  display: grid;
  grid-template-columns: 230px repeat(3, 131px);
  align-items: center;
  margin-bottom: 39px;
`;

const PositionLabel = styled.span`
  padding-bottom: 8px;
  white-space: nowrap;
`;

const RadioOption = styled.label`
  display: grid;
  justify-items: center;
  gap: 14px;
`;

const RadioInput = styled.input`
  width: 28px;
  height: 28px;
  border-radius: 50%;
  background: #fff;
  box-shadow: inset 0 1px 2px rgba(0, 0, 0, 0.35), inset 0 0 1px rgba(0, 0, 0, 0.4);
  appearance: none;

  &:checked {
    background: radial-gradient(circle, #fff 6px, #0f6bff 7px);
    box-shadow: 0 1px 2px rgba(0, 80, 255, 0.4);
  }
`;

const PopUpRow = styled.div`
  display: flex;
  align-items: center;
  gap: 16px;
  height: 40px;
  margin-bottom: 21px;
`;

const DoubleClickRow = styled(PopUpRow)`
  gap: 20px;
  margin-bottom: 16px;
`;

const PopUpCell = styled.span`
  display: inline-grid;
  align-items: center;

  > * {
    grid-area: 1 / 1;
  }
`;

const PopUpSelect = styled.select`
  min-width: 171px;
  height: 40px;
  padding: 0 52px 2px 16px;
  border-radius: 9px;
  background: #fff;
  box-shadow: 0 0 1px rgba(0, 0, 0, 0.4), 0 1px 2px rgba(0, 0, 0, 0.3);
  appearance: none;
`;

const Stepper = styled.svg`
  justify-self: end;
  margin-right: 4px;
  fill: none;
  stroke: #fff;
  stroke-width: 2.6;
  stroke-linecap: round;
  stroke-linejoin: round;
  pointer-events: none;

  rect {
    stroke: none;
  }
`;

const CheckRow = styled.div`
  display: flex;
  align-items: center;
  gap: 8px;
  height: 32px;
  white-space: nowrap;
`;

const CheckBoxCell = styled.span`
  display: grid;

  > * {
    grid-area: 1 / 1;
  }
`;

const CheckInput = styled.input`
  width: 28px;
  height: 28px;
  border-radius: 7px;
  background: #fff;
  box-shadow: inset 0 1px 2px rgba(0, 0, 0, 0.35), inset 0 0 1px rgba(0, 0, 0, 0.4);
  appearance: none;

  &:checked {
    background: linear-gradient(#2a7eff, #0062fb);
    box-shadow: 0 1px 2px rgba(0, 80, 255, 0.4);
  }
`;

const CheckMark = styled.svg`
  fill: none;
  stroke: #fff;
  stroke-width: 3.4;
  stroke-linecap: round;
  stroke-linejoin: round;
  pointer-events: none;
`;

const CheckList = styled.div`
  display: grid;
  gap: 20px;
`;

const TightCheckList = styled(CheckList)`
  gap: 16px;
`;

const MenuBarSection = styled.section`
  padding: 27px 39px 39px 33px;
`;

const MenuBarRow = styled.div`
  display: flex;
  align-items: flex-end;
  justify-content: space-between;
`;

const HelpButton = styled.button`
  width: 40px;
  height: 40px;
  border-radius: 50%;
  background: #fff;
  box-shadow: 0 0 1px rgba(0, 0, 0, 0.4), 0 1px 3px rgba(0, 0, 0, 0.3);
  font-size: 29px;
  font-weight: 500;
`;

/* an icon lying free on the desktop */
const Drive = styled.div`
  position: absolute;
  top: 22px;
  right: 44px;
  display: grid;
  justify-items: center;
  gap: 21px;
  color: #fff;
  font-size: 24px;
  font-weight: 600;
  line-height: 32px;
  text-shadow: 0 2px 4px rgba(0, 0, 0, 0.6);
`;

const DockArea = styled.footer`
  display: flex;
  justify-content: center;
  margin-top: auto;
  padding: 0 0 9px 3px;
`;

const Dock = styled.div`
  display: flex;
  align-items: center;
  gap: 22px;
  height: 110px;
  padding: 0 19px 6px 15px;
  border: 1px solid rgba(200, 170, 255, 0.45);
  border-radius: 32px;
  background: linear-gradient(90deg, #7f5cdc, #745cd0 30%, #7e5cea 50%, #8a56ff 60%, #9e4cff 75%, #ac48ff 86%, #9a48ff);
  box-shadow: 0 0 2px rgba(0, 0, 0, 0.4);
`;

const DockItem = styled.button`
  position: relative;
  width: ${(p) => (p.$wide ? 82 : 70)}px;
  height: 70px;
  filter: drop-shadow(0 1px 2px rgba(0, 0, 0, 0.25));

  &::after {
    content: "";
    display: ${(p) => (p.$open ? "block" : "none")};
    position: absolute;
    bottom: -19px;
    left: 31px;
    width: 8px;
    height: 8px;
    border-radius: 50%;
    background: #1c0078;
  }
`;

const TrashItem = styled.button`
  margin-left: -4px;
`;

const DockDivider = styled.span`
  width: 2px;
  height: 82px;
  margin: 6px 2px 0 8px;
  background: #7420ee;
`;

const PetalRect = styled.rect`
  mix-blend-mode: multiply;
`;

const CalendarTile = styled.span`
  display: grid;
  grid-template-rows: 21px 1fr;
  height: 70px;
  overflow: hidden;
  border-radius: 16px;
  background: linear-gradient(#fff, #f2f0f0);
  text-align: center;
`;

const CalendarMonth = styled.span`
  background: #f8574c;
  color: #fff;
  font-size: 14px;
  font-weight: 600;
  line-height: 23px;
`;

const CalendarDay = styled.span`
  color: #2c2c2e;
  font-size: 42px;
  font-weight: 300;
  line-height: 46px;
`;
